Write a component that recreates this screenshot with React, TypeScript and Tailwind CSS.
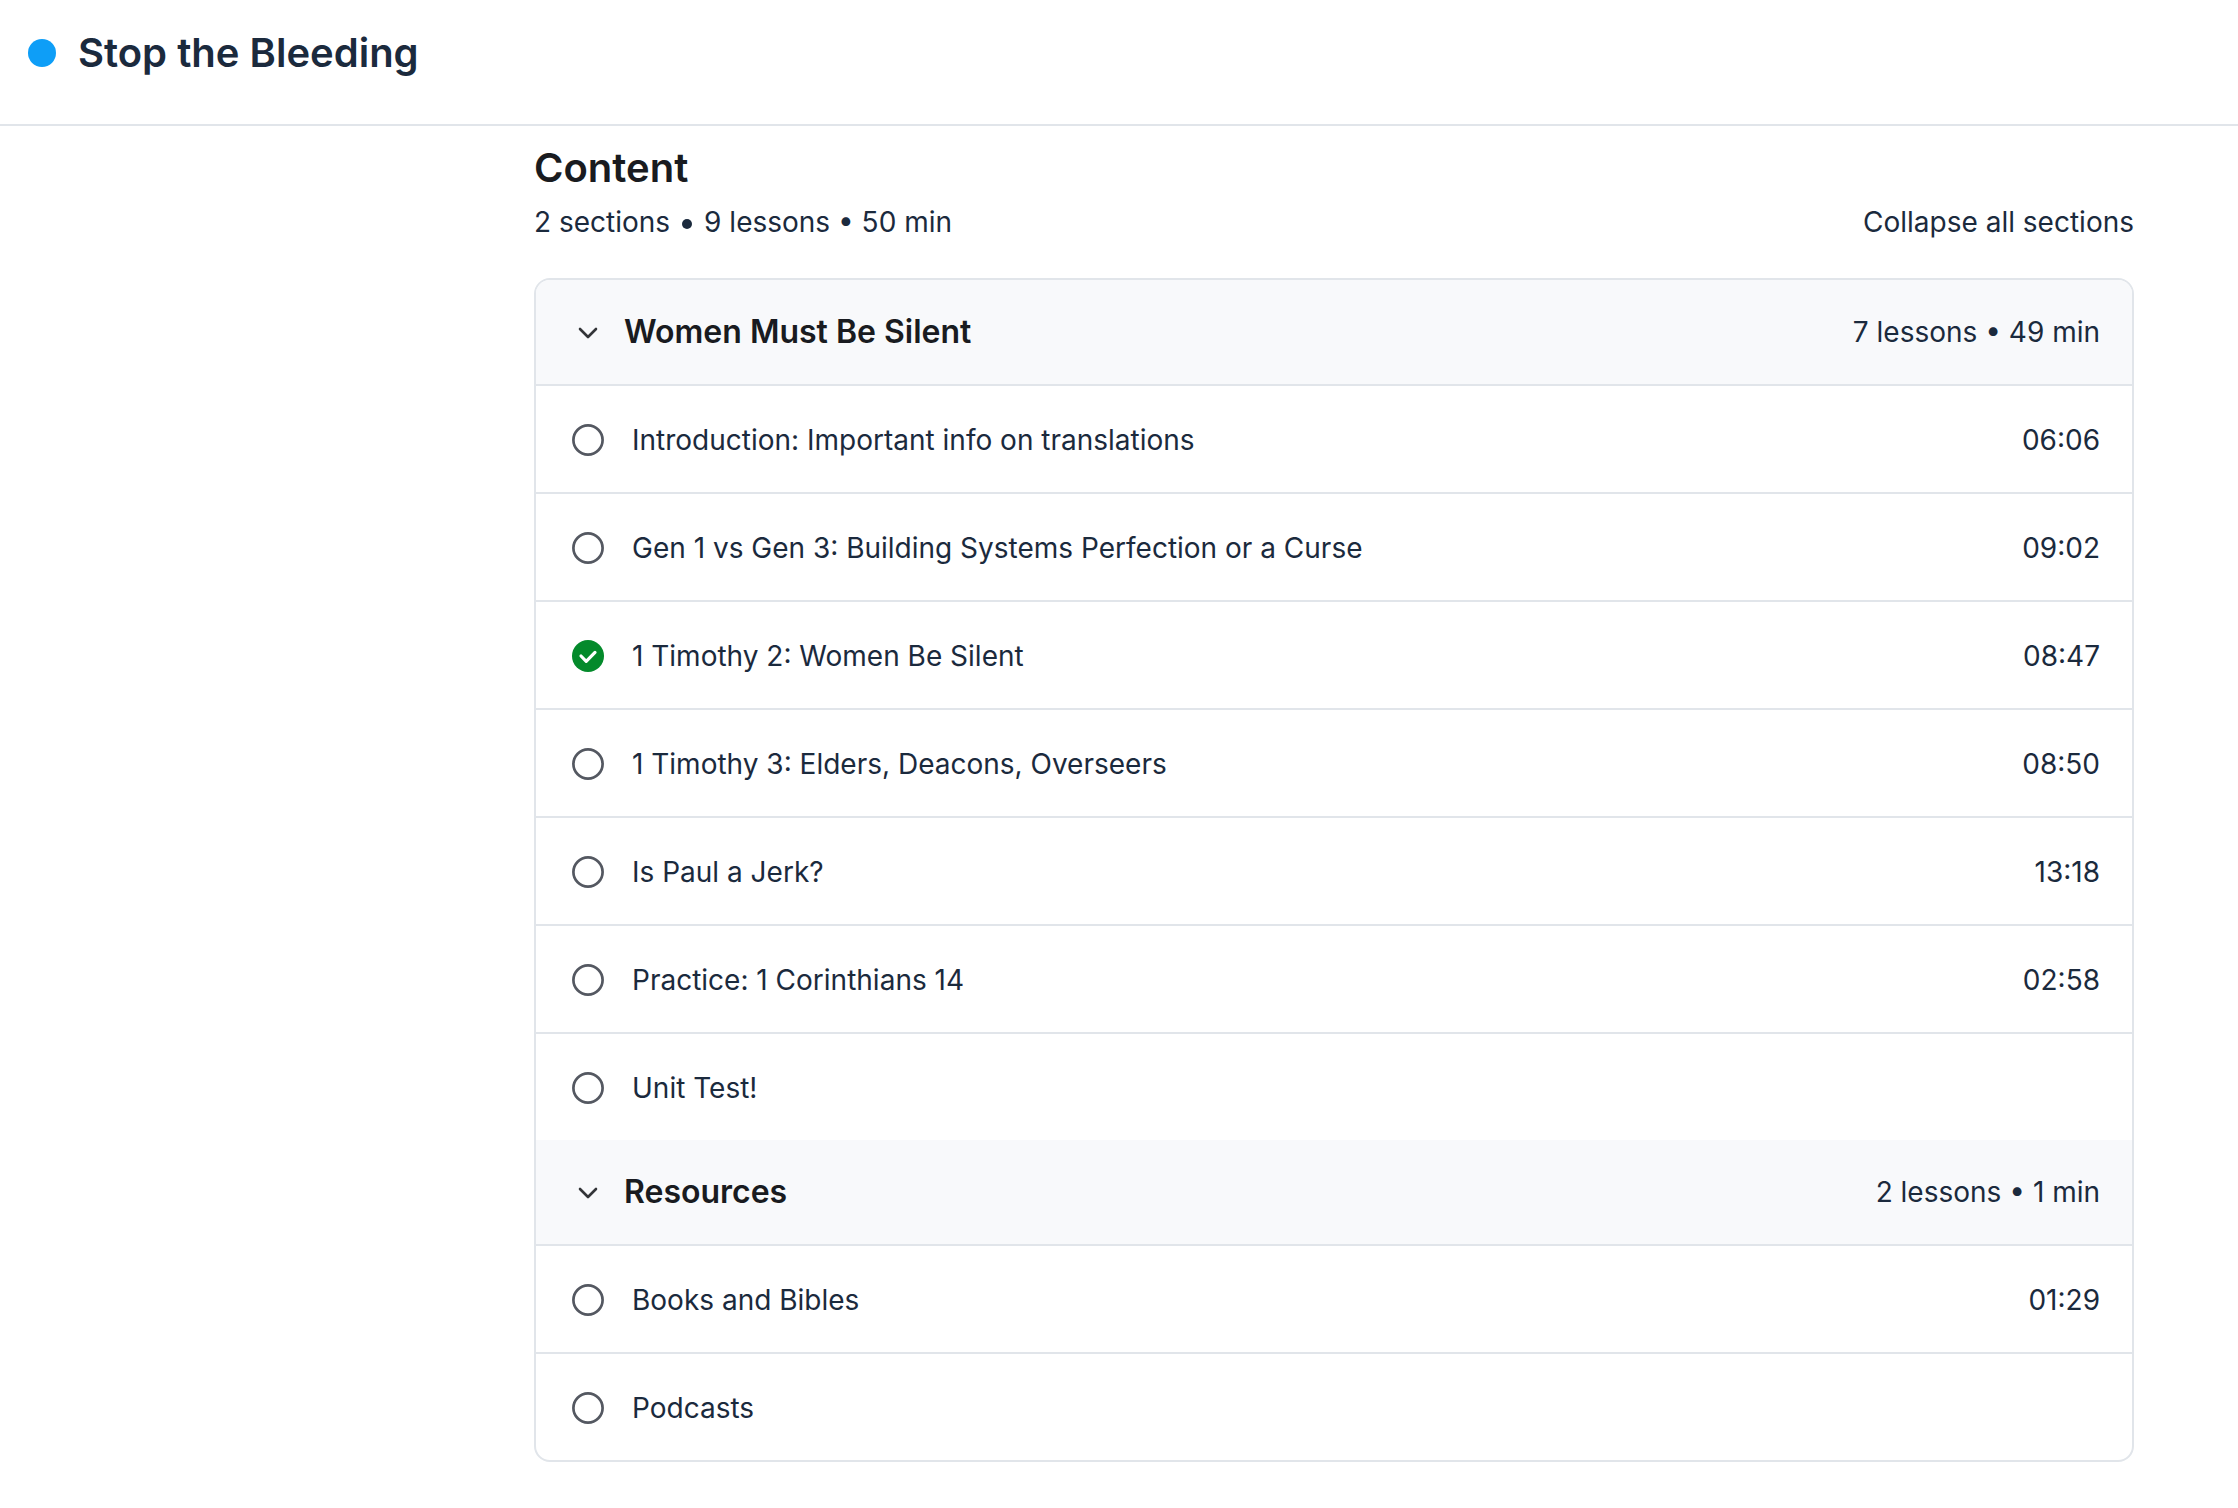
// App.tsx
import { useState } from 'react';

type Lesson = { title: string; duration?: string; done?: boolean };
type Section = { title: string; lessonCount: string; duration: string; lessons: Lesson[] };

const sections: Section[] = [
  {
    title: 'Women Must Be Silent',
    lessonCount: '7 lessons',
    duration: '49 min',
    lessons: [
      { title: 'Introduction: Important info on translations', duration: '06:06' },
      { title: 'Gen 1 vs Gen 3: Building Systems Perfection or a Curse', duration: '09:02' },
      { title: '1 Timothy 2: Women Be Silent', duration: '08:47', done: true },
      { title: '1 Timothy 3: Elders, Deacons, Overseers', duration: '08:50' },
      { title: 'Is Paul a Jerk?', duration: '13:18' },
      { title: 'Practice: 1 Corinthians 14', duration: '02:58' },
      { title: 'Unit Test!' },
    ],
  },
  {
    title: 'Resources',
    lessonCount: '2 lessons',
    duration: '1 min',
    lessons: [{ title: 'Books and Bibles', duration: '01:29' }, { title: 'Podcasts' }],
  },
];

const StatusIcon = ({ done }: { done?: boolean }) => (
  <svg className="w-8 h-8 shrink-0" viewBox="0 0 32 32" fill="none" aria-hidden="true">
    {done ? (
      <>
        <circle cx="16" cy="16" r="16" fill="#048a2b" />
        <path d="M9 16l5.2 5.3L23 12.4" stroke="#fff" strokeWidth={3.2} strokeLinecap="round" strokeLinejoin="round" />
      </>
    ) : (
      <circle cx="16" cy="16" r="14.6" stroke="#545861" strokeWidth={2.7} />
    )}
  </svg>
);

const Chevron = ({ open }: { open: boolean }) => (
  <svg className={open ? 'w-8 h-8 shrink-0' : 'w-8 h-8 shrink-0 -rotate-90'} viewBox="0 0 32 32" fill="none" aria-hidden="true">
    <path d="M8 13l8 8 8-8" stroke="#333538" strokeWidth={2.6} strokeLinecap="round" strokeLinejoin="round" />
  </svg>
);

const App = () => {
  const [open, setOpen] = useState(sections.map(() => true));
  const anyOpen = open.some(Boolean);

  return (
    <div className="min-h-screen bg-white font-['Inter',sans-serif] text-[28px] leading-10 text-[#1b2a3d]">
      {/* Top bar */}
      <header className="flex items-center gap-[22px] px-7 pt-[29px] pb-[47px] border-b-2 border-[#e1e5ea]">
        <span className="w-7 h-7 rounded-full bg-[#0e9ef7]"></span>
        <h1 className="text-[40px] leading-12 font-semibold">Stop the Bleeding</h1>
      </header>

      <main className="ml-[534px] mr-[104px] pt-[18px]">
        <h2 className="text-[40px] leading-12 font-semibold text-[#191b20]">Content</h2>
        <div className="mt-2.5 flex items-center justify-between">
          <p className="flex items-center">
            <span>2 sections</span>
            <span className="mx-3 mt-1 w-2.5 h-2.5 rounded-full bg-current"></span>
            <span>9 lessons • 50 min</span>
          </p>
          <button type="button" onClick={() => setOpen(sections.map(() => !anyOpen))}>
            {anyOpen ? 'Collapse all sections' : 'Expand all sections'}
          </button>
        </div>

        {/* Sections */}
        <div className="mt-9 border-2 border-[#e1e5ea] rounded-2xl overflow-hidden">
          {sections.map((section, i) => (
            <section key={section.title}>
              <button
                type="button"
                aria-expanded={open[i]}
                onClick={() => setOpen(open.map((value, j) => (j === i ? !value : value)))}
                className="flex w-full items-center gap-5 pl-9 pr-8 py-8 bg-[#f8f9fb] border-b-2 border-[#e1e5ea] text-left"
              >
                <Chevron open={open[i]} />
                <span className="flex-1 text-[32px] font-semibold text-[#191b20]">{section.title}</span>
                <span>
                  {section.lessonCount} • {section.duration}
                </span>
              </button>
              {open[i] && (
                <ul className="divide-y-2 divide-[#e1e5ea]">
                  {section.lessons.map((lesson) => (
                    <li key={lesson.title}>
                      <a href="#" className="flex items-center gap-7 pl-9 pr-8 pt-[34px] pb-8">
                        <StatusIcon done={lesson.done} />
                        <span className="flex-1">{lesson.title}</span>
                        <span>{lesson.duration}</span>
                      </a>
                    </li>
                  ))}
                </ul>
              )}
            </section>
          ))}
        </div>
      </main>
    </div>
  );
};

export default App;
